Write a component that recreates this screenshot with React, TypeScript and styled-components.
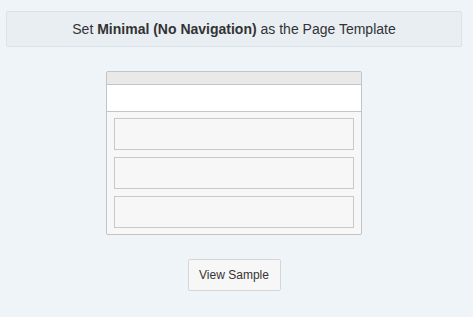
import styled, { createGlobalStyle } from 'styled-components';

const GlobalStyle = createGlobalStyle`
	html, body {
		margin: 0;
		background: #eff4f9;
		font-family: 'Liberation Sans', Arial, sans-serif;
	}
`;

const App = () => {
	return (
		<>
			<GlobalStyle />
			<Page>
				<Banner>
					Set <strong>Minimal (No Navigation)</strong> as the Page Template
				</Banner>
				<Preview>
					<PreviewHeader />
					<PreviewHero />
					<PreviewBody>
						<Region />
						<Region />
						<Region />
					</PreviewBody>
				</Preview>
				<SampleButton>View Sample</SampleButton>
			</Page>
		</>
	);
};

const Page = styled.div`
	display: flex;
	flex-direction: column;
	align-items: center;
	padding: 11px 11px 0 6px;
`;

const Banner = styled.div`
	box-sizing: border-box;
	align-self: stretch;
	height: 36px;
	display: flex;
	align-items: center;
	justify-content: center;
	background: #e9eef3;
	border: 1px solid #dce2e8;
	border-radius: 2px;
	color: #333;
	font-size: 14px;
	white-space: pre;

	strong {
		font-weight: bold;
	}
`;

const Preview = styled.div`
	box-sizing: border-box;
	width: 256px;
	margin-top: 24px;
	border: 1px solid #c4c4c4;
	border-radius: 2px;
	background: #f7f7f7;
`;

const PreviewHeader = styled.div`
	height: 12px;
	background: #e9e9e9;
	border-bottom: 1px solid #c4c4c4;
`;

const PreviewHero = styled.div`
	height: 26px;
	background: #fff;
	border-bottom: 1px solid #c4c4c4;
`;

const PreviewBody = styled.div`
	display: flex;
	flex-direction: column;
	gap: 7px;
	padding: 6px 7px 6px 7px;
`;

const Region = styled.div`
	box-sizing: border-box;
	height: 32px;
	border: 1px solid #c8c8c8;
	background: #f7f7f7;
`;

const SampleButton = styled.button`
	box-sizing: border-box;
	width: 93px;
	height: 32px;
	margin-top: 24px;
	border: 1px solid #d6d6d6;
	border-radius: 2px;
	background: #f7f7f7;
	color: #333;
	font-family: 'Liberation Sans', Arial, sans-serif;
	font-size: 12px;
	cursor: pointer;
`;

export default App;
